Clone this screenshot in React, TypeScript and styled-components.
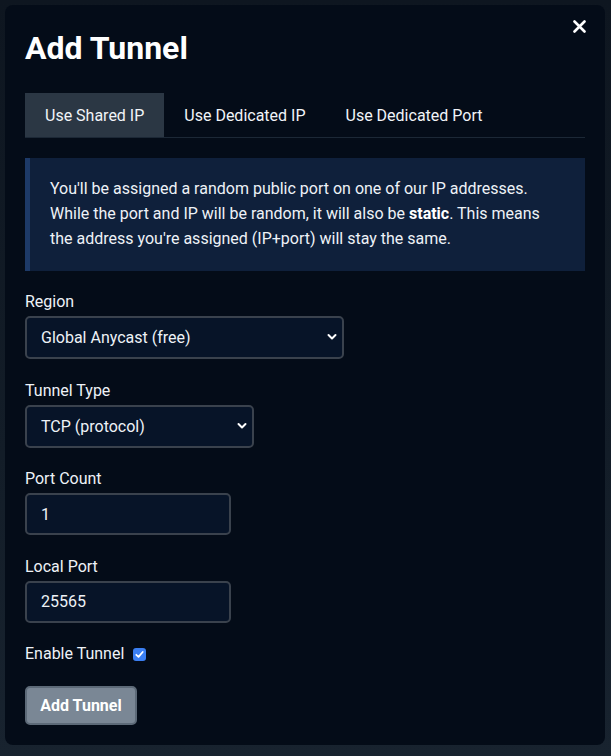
import React, { FC, useState } from 'react';
import styled, { createGlobalStyle } from 'styled-components';

const GlobalStyle = createGlobalStyle`
	* {
		box-sizing: border-box;
	}
	html, body {
		margin: 0;
		padding: 0;
		background: #141e29;
		font-family: Roboto, "Liberation Sans", sans-serif;
		color: #e8edf3;
	}
`;

const Backdrop = styled.div`
	width: 611px;
	height: 756px;
	padding: 5px 6px 11px 5px;
	background: linear-gradient(180deg, #0e1620 0%, #131d28 60%, #18232f 100%);
`;

const Modal = styled.div`
	position: relative;
	height: 100%;
	background: #040c18;
	border-radius: 8px;
	padding: 23px 20px 20px;
	display: flex;
	flex-direction: column;
`;

const CloseButton = styled.button`
	position: absolute;
	top: 9px;
	right: 14px;
	width: 24px;
	height: 24px;
	padding: 0;
	border: none;
	background: transparent;
	color: #ffffff;
	display: flex;
	align-items: center;
	justify-content: center;
	cursor: pointer;
`;

const Title = styled.h2`
	margin: 0 0 25px;
	font-size: 32px;
	font-weight: 700;
	line-height: 40px;
	color: #ffffff;
`;

const TabList = styled.div`
	display: flex;
	border-bottom: 1px solid #1c2836;
	margin-bottom: 20px;
`;

const Tab = styled.button<{ $active?: boolean }>`
	height: 44px;
	padding: 0 20px;
	border: none;
	background: ${p => (p.$active ? '#2b3744' : 'transparent')};
	color: #f1f4f8;
	font-family: inherit;
	font-size: 16px;
	cursor: pointer;
`;

const Info = styled.div`
	background: #0f203b;
	border-left: 5px solid #1d3a68;
	padding: 18px 20px 20px 20px;
	font-size: 16px;
	line-height: 25px;
	color: #eef2f7;
	margin-bottom: 19px;

	b {
		font-weight: 700;
		color: #ffffff;
	}
`;

const Field = styled.div`
	display: flex;
	flex-direction: column;
	align-items: flex-start;
	margin-bottom: 19.5px;
`;

const Label = styled.label`
	font-size: 16px;
	line-height: 24px;
	margin-bottom: 2px;
	color: #eef2f7;
`;

const SelectWrap = styled.div<{ $width: number }>`
	position: relative;
	width: ${p => p.$width}px;
`;

const Select = styled.select`
	width: 100%;
	height: 43px;
	appearance: none;
	background: #071428;
	border: 2px solid #3a424d;
	border-radius: 5px;
	padding: 0 30px 0 14px;
	color: #eef2f7;
	font-family: inherit;
	font-size: 16px;
	outline: none;
`;

const Chevron = styled.svg`
	position: absolute;
	right: 7px;
	top: 16px;
	pointer-events: none;
`;

const Input = styled.input`
	width: 206px;
	height: 42px;
	background: #071428;
	border: 2px solid #3a424d;
	border-radius: 5px;
	padding: 0 14px;
	color: #eef2f7;
	font-family: inherit;
	font-size: 16px;
	outline: none;
`;

const CheckRow = styled.label`
	display: flex;
	align-items: center;
	gap: 9px;
	font-size: 16px;
	line-height: 24px;
	margin-bottom: 20px;
	color: #eef2f7;
`;

const Check = styled.span<{ $on: boolean }>`
	width: 13px;
	height: 13px;
	border-radius: 3px;
	background: ${p => (p.$on ? '#3b7ff2' : 'transparent')};
	border: ${p => (p.$on ? 'none' : '1px solid #767676')};
	display: flex;
	align-items: center;
	justify-content: center;
	margin-top: 1px;
`;

const SubmitButton = styled.button`
	align-self: flex-start;
	width: 112px;
	height: 40px;
	background: #7a8795;
	border: 2px solid #5d6a78;
	border-radius: 5px;
	color: #ffffff;
	font-family: inherit;
	font-size: 16px;
	font-weight: 700;
	cursor: pointer;
`;

type SelectFieldProps = {
	label: string
	width: number
	options: string[]
}
const SelectField: FC<SelectFieldProps> = ({ label, width, options }) => (
	<Field>
		<Label>{label}</Label>
		<SelectWrap $width={width}>
			<Select defaultValue={options[0]}>
				{options.map(o => <option key={o}>{o}</option>)}
			</Select>
			<Chevron width="10" height="10" viewBox="0 0 10 10">
				<path d="M1.5 3 L5 6.5 L8.5 3" fill="none" stroke="#ffffff" strokeWidth="2" strokeLinecap="round" strokeLinejoin="round" />
			</Chevron>
		</SelectWrap>
	</Field>
);

const tabs = ['Use Shared IP', 'Use Dedicated IP', 'Use Dedicated Port'];

const App: FC = () => {
	const [tab, setTab] = useState(0);
	const [enabled, setEnabled] = useState(true);

	return (
		<>
			<GlobalStyle />
			<Backdrop>
				<Modal>
					<CloseButton aria-label="Close">
						<svg width="13" height="13" viewBox="0 0 13 13">
							<path d="M1.5 1.5 L11.5 11.5 M11.5 1.5 L1.5 11.5" stroke="#ffffff" strokeWidth="2.6" strokeLinecap="round" />
						</svg>
					</CloseButton>
					<Title>Add Tunnel</Title>
					<TabList>
						{tabs.map((t, i) =>
							<Tab key={t} $active={i === tab} onClick={() => setTab(i)}>{t}</Tab>
						)}
					</TabList>
					<Info>
						You'll be assigned a random public port on one of our IP addresses.
						<br />
						While the port and IP will be random, it will also be <b>static</b>. This means
						<br />
						the address you're assigned (IP+port) will stay the same.
					</Info>
					<SelectField label="Region" width={319} options={['Global Anycast (free)']} />
					<SelectField label="Tunnel Type" width={229} options={['TCP (protocol)']} />
					<Field>
						<Label>Port Count</Label>
						<Input defaultValue="1" />
					</Field>
					<Field>
						<Label>Local Port</Label>
						<Input defaultValue="25565" />
					</Field>
					<CheckRow onClick={() => setEnabled(!enabled)}>
						Enable Tunnel
						<Check $on={enabled}>
							{enabled &&
								<svg width="9" height="9" viewBox="0 0 9 9">
									<path d="M1.3 4.8 L3.5 6.8 L7.7 2" fill="none" stroke="#ffffff" strokeWidth="1.8" strokeLinecap="round" strokeLinejoin="round" />
								</svg>
							}
						</Check>
					</CheckRow>
					<SubmitButton>Add Tunnel</SubmitButton>
				</Modal>
			</Backdrop>
		</>
	);
};

export default App;
